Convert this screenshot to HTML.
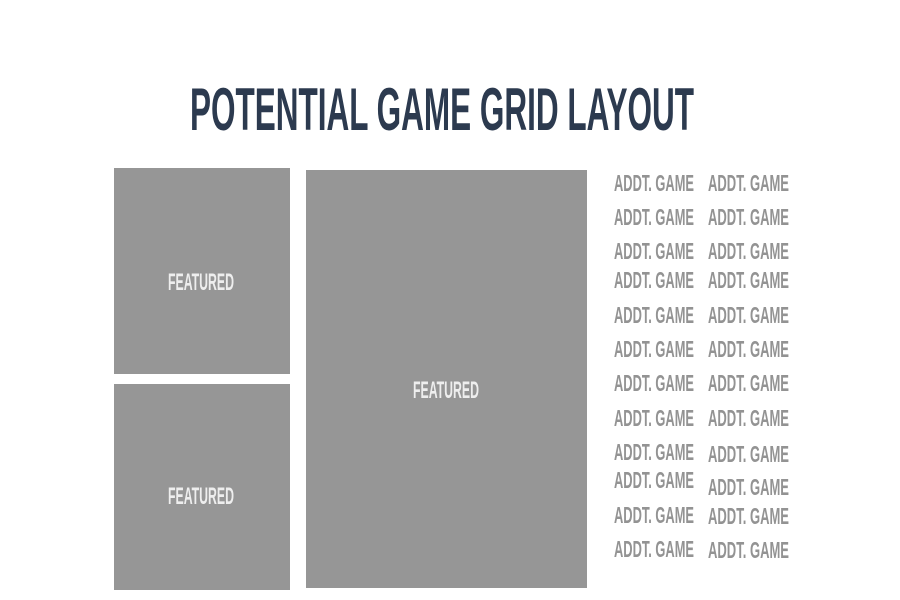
<!DOCTYPE html>
<html><head><meta charset="utf-8"><style>html,body{margin:0;padding:0;background:#fff}svg{display:block}</style></head><body>
<svg width="900" height="600" viewBox="0 0 900 600" xmlns="http://www.w3.org/2000/svg" font-family="'Liberation Sans Narrow','Liberation Sans',sans-serif" font-weight="bold">
<rect width="900" height="600" fill="#fff"/>
<text x="190" y="130" font-size="60" fill="#2c3a4f" textLength="504" lengthAdjust="spacingAndGlyphs">POTENTIAL GAME GRID LAYOUT</text>
<rect x="114" y="168" width="176" height="206" fill="#969696"/>
<rect x="114" y="384" width="176" height="206" fill="#969696"/>
<rect x="306" y="170" width="281" height="418" fill="#969696"/>
<g fill="#eeeeee" font-size="24">
<text x="168" y="290" textLength="66" lengthAdjust="spacingAndGlyphs">FEATURED</text>
<text x="168" y="504" textLength="66" lengthAdjust="spacingAndGlyphs">FEATURED</text>
<text x="413" y="398" textLength="66" lengthAdjust="spacingAndGlyphs">FEATURED</text>
</g>
<g fill="#939393" font-size="23">
<text x="614" y="191" textLength="80" lengthAdjust="spacingAndGlyphs">ADDT. GAME</text>
<text x="614" y="225" textLength="80" lengthAdjust="spacingAndGlyphs">ADDT. GAME</text>
<text x="614" y="259" textLength="80" lengthAdjust="spacingAndGlyphs">ADDT. GAME</text>
<text x="614" y="288" textLength="80" lengthAdjust="spacingAndGlyphs">ADDT. GAME</text>
<text x="614" y="323" textLength="80" lengthAdjust="spacingAndGlyphs">ADDT. GAME</text>
<text x="614" y="357" textLength="80" lengthAdjust="spacingAndGlyphs">ADDT. GAME</text>
<text x="614" y="391" textLength="80" lengthAdjust="spacingAndGlyphs">ADDT. GAME</text>
<text x="614" y="426" textLength="80" lengthAdjust="spacingAndGlyphs">ADDT. GAME</text>
<text x="614" y="460" textLength="80" lengthAdjust="spacingAndGlyphs">ADDT. GAME</text>
<text x="614" y="488" textLength="80" lengthAdjust="spacingAndGlyphs">ADDT. GAME</text>
<text x="614" y="523" textLength="80" lengthAdjust="spacingAndGlyphs">ADDT. GAME</text>
<text x="614" y="557" textLength="80" lengthAdjust="spacingAndGlyphs">ADDT. GAME</text>
<text x="708" y="191" textLength="81" lengthAdjust="spacingAndGlyphs">ADDT. GAME</text>
<text x="708" y="225" textLength="81" lengthAdjust="spacingAndGlyphs">ADDT. GAME</text>
<text x="708" y="259" textLength="81" lengthAdjust="spacingAndGlyphs">ADDT. GAME</text>
<text x="708" y="288" textLength="81" lengthAdjust="spacingAndGlyphs">ADDT. GAME</text>
<text x="708" y="323" textLength="81" lengthAdjust="spacingAndGlyphs">ADDT. GAME</text>
<text x="708" y="357" textLength="81" lengthAdjust="spacingAndGlyphs">ADDT. GAME</text>
<text x="708" y="391" textLength="81" lengthAdjust="spacingAndGlyphs">ADDT. GAME</text>
<text x="708" y="426" textLength="81" lengthAdjust="spacingAndGlyphs">ADDT. GAME</text>
<text x="708" y="462" textLength="81" lengthAdjust="spacingAndGlyphs">ADDT. GAME</text>
<text x="708" y="495" textLength="81" lengthAdjust="spacingAndGlyphs">ADDT. GAME</text>
<text x="708" y="524" textLength="81" lengthAdjust="spacingAndGlyphs">ADDT. GAME</text>
<text x="708" y="558" textLength="81" lengthAdjust="spacingAndGlyphs">ADDT. GAME</text>
</g>
</svg>
</body></html>
